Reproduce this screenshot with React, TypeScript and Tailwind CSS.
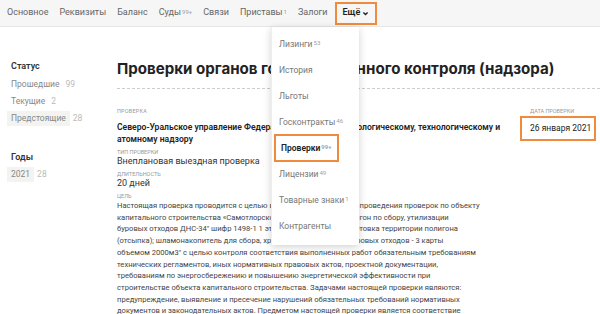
import React from "react";

const font = { fontFamily: "Roboto, 'Noto Sans', sans-serif" };
const titleFont = { fontFamily: "Inter, 'Noto Sans', sans-serif" };

function Sup({ children }: { children: React.ReactNode }) {
  return <sup className="text-[6px] ml-[1px] relative -top-[1px] text-gray-400">{children}</sup>;
}

export default function App() {
  const nav: [string, string?][] = [
    ["Основное"],
    ["Реквизиты"],
    ["Баланс"],
    ["Суды", "99+"],
    ["Связи"],
    ["Приставы", "1"],
    ["Залоги"],
  ];
  const menu: [string, string?][] = [
    ["Лизинги", "53"],
    ["История"],
    ["Льготы"],
    ["Госконтракты", "46"],
    ["Проверки", "99+"],
    ["Лицензии", "49"],
    ["Товарные знаки", "1"],
    ["Контрагенты"],
  ];
  const para = [
    "Настоящая проверка проводится с целью выполнения программы проведения проверок по объекту",
    "капитального строительства «Самотлорское месторождение. Полигон по сбору, утилизации",
    "буровых отходов ДНС-34\" шифр 1498-1 1 этап строительства: подготовка территории полигона",
    "(отсыпка); шламонакопитель для сбора, хранения и утилизации буровых отходов - 3 карты",
    "объемом 2000м3\" с целью контроля соответствия выполненных работ обязательным требованиям",
    "технических регламентов, иных нормативных правовых актов, проектной документации,",
    "требованиям по энергосбережению и повышению энергетической эффективности при",
    "строительстве объекта капитального строительства. Задачами настоящей проверки являются:",
    "предупреждение, выявление и пресечение нарушений обязательных требований нормативных",
    "документов и законодательных актов. Предметом настоящей проверки является соответствие",
  ];
  return (
    <div className="relative w-[600px] h-[314px] overflow-hidden bg-white text-[#333]" style={font}>
      <div className="h-[27px] bg-[#f6f6f6] border-b border-[#e6e6e6] flex items-center pl-[7px] gap-[11px] text-[9px] text-[#666]">
        {nav.map(([t, s]) => (
          <span key={t} className="whitespace-nowrap">
            {t}
            {s && <Sup>{s}</Sup>}
          </span>
        ))}
        <span className="ml-[-4px] h-[23px] px-[6px] flex items-center border-2 border-[#f08a3c] text-[#222] font-semibold whitespace-nowrap">
          Ещё
          <svg width="7" height="7" viewBox="0 0 10 10" className="ml-[2px]">
            <path d="M2 3.5 L5 6.5 L8 3.5" stroke="#222" strokeWidth="2" fill="none" />
          </svg>
        </span>
      </div>

      <div className="flex">
        <div className="w-[117px] shrink-0 pl-[7px] pt-[33px] text-[8.5px]">
          <div className="pl-[4px] font-semibold text-[#333] text-[9px] leading-[12px] mb-[4px]">Статус</div>
          <div className="flex flex-col items-start">
            <div className="h-[17px] flex items-center px-[4px]"><span className="text-[#888]">Прошедшие</span><span className="ml-[6px] text-[#bbb]">99</span></div>
            <div className="h-[17px] flex items-center px-[4px]"><span className="text-[#888]">Текущие</span><span className="ml-[6px] text-[#bbb]">2</span></div>
            <div className="h-[17px] flex items-center"><span className="bg-[#f3f3f0] px-[4px] py-[1px] text-[#888]">Предстоящие</span><span className="ml-[3px] text-[#bbb]">28</span></div>
          </div>
          <div className="pl-[4px] font-semibold text-[#333] text-[9px] leading-[12px] mt-[24px] mb-[4px]">Годы</div>
          <div className="h-[15px] flex items-center"><span className="bg-[#f3f3f0] px-[4px] py-[1px] text-[#888]">2021</span><span className="ml-[3px] text-[#bbb]">28</span></div>
        </div>

        <div className="flex-1 pt-[31px]">
          <h1 className="text-[15.1px] font-bold text-[#222] leading-[22px] whitespace-nowrap" style={titleFont}>
            Проверки органов государственного контроля (надзора)
          </h1>
          <div className="mt-[8px] border-b border-dashed border-[#ccc]" />
          <div className="flex mt-[18px]">
            <div className="w-[403px] shrink-0">
              <div className="text-[5.5px] uppercase text-[#999] tracking-[0.2px] leading-[8px]">Проверка</div>
              <div className="mt-[6px] text-[8.6px] font-semibold leading-[12px] text-[#222] w-[400px]">
                Северо-Уральское управление Федеральной службы по экологическому, технологическому и атомному надзору
              </div>
              <div className="text-[5.5px] uppercase text-[#999] leading-[8px] mt-[3px]">Тип проверки</div>
              <div className="text-[9px] leading-[11px]">Внеплановая выездная проверка</div>
              <div className="text-[5.5px] uppercase text-[#999] leading-[8px] mt-[3px]">Длительность</div>
              <div className="text-[9px] leading-[11px]">20 дней</div>
              <div className="text-[5.5px] uppercase text-[#999] leading-[8px] mt-[3px]">Цель</div>
              <div className="text-[7.6px] leading-[11.7px] text-[#444] whitespace-nowrap">
                {para.map((l) => (
                  <div key={l}>{l}</div>
                ))}
              </div>
            </div>
            <div>
              <div className="pl-[10px] text-[5.5px] uppercase text-[#999] leading-[8px]">Дата проверки</div>
              <div className="mt-[1px] w-[76px] h-[25px] border-2 border-[#f08a3c] flex items-center pl-[8px] text-[8.5px] text-[#222] whitespace-nowrap">
                26 января 2021
              </div>
            </div>
          </div>
        </div>
      </div>

      <div className="absolute left-[271px] top-[27px] w-[88px] h-[218px] bg-white shadow-[0_2px_8px_rgba(0,0,0,0.18)] border-l border-[#eee] pt-[4px] text-[8.5px] text-[#777]">
        {menu.map(([t, s]) => {
          const active = t === "Проверки";
          return active ? (
            <div key={t} className="my-[-1px] h-[28px] flex">
              <div className="ml-[2px] border-2 border-[#f08a3c] flex items-center pl-[5px] pr-[5px] text-[#222] font-semibold whitespace-nowrap">
                {t}
                <Sup>{s}</Sup>
              </div>
            </div>
          ) : (
            <div key={t} className="h-[26px] flex items-center pl-[7px] whitespace-nowrap">
              {t}
              {s && <Sup>{s}</Sup>}
            </div>
          );
        })}
      </div>
    </div>
  );
}
